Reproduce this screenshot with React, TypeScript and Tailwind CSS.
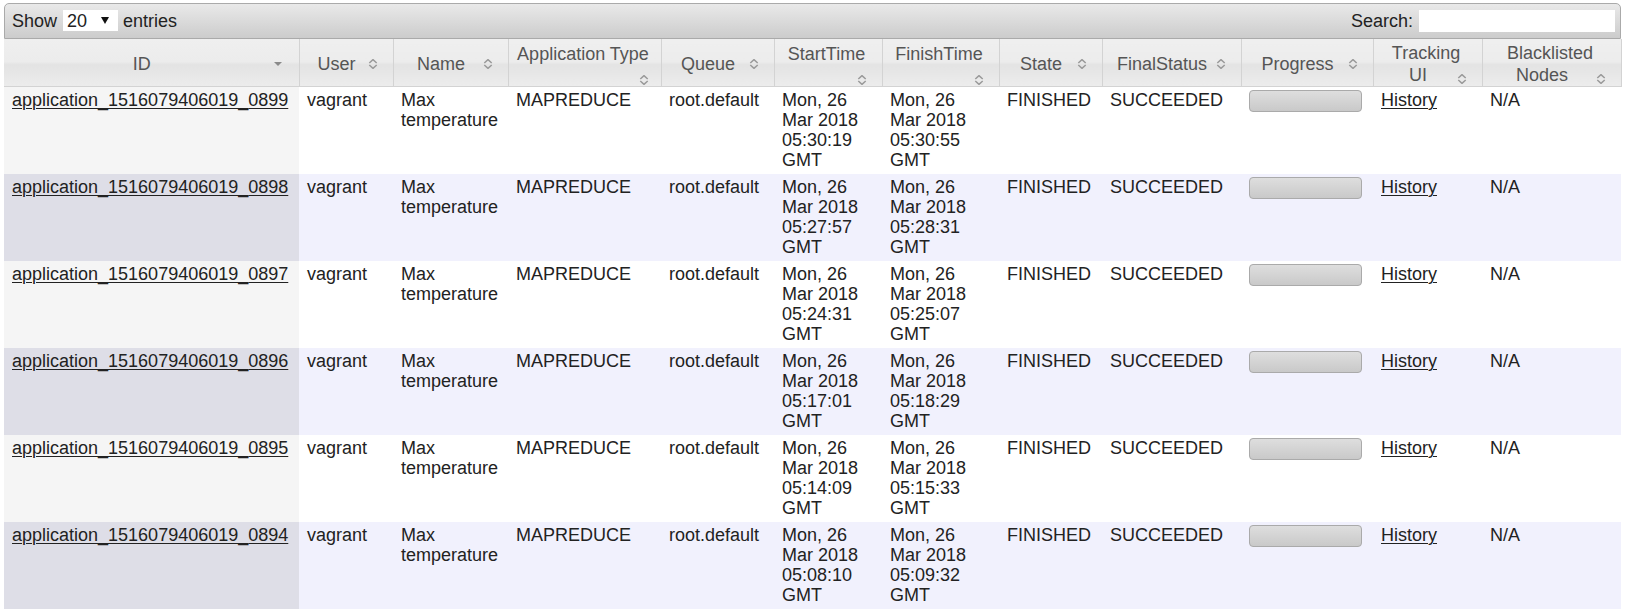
import React from "react";

const rows = [
  { id: "0899", s: "05:30:19", f: "05:30:55" },
  { id: "0898", s: "05:27:57", f: "05:28:31" },
  { id: "0897", s: "05:24:31", f: "05:25:07" },
  { id: "0896", s: "05:17:01", f: "05:18:29" },
  { id: "0895", s: "05:14:09", f: "05:15:33" },
  { id: "0894", s: "05:08:10", f: "05:09:32" },
];

type Col = { label: string; w: number; iconCls: string; pad: string; sorted?: boolean };

const cols: Col[] = [
  { label: "ID", w: 295, iconCls: "mt-[6px]", pad: "pl-[9px] pr-[12px]", sorted: true },
  { label: "User", w: 94, iconCls: "mt-[6px]", pad: "pl-[9px] pr-[12px]" },
  { label: "Name", w: 115, iconCls: "mt-[6px]", pad: "pl-[9px] pr-[12px]" },
  { label: "Application Type", w: 153, iconCls: "mt-[10px]", pad: "pl-[6px] pr-[9px]" },
  { label: "Queue", w: 113, iconCls: "mt-[6px]", pad: "pl-[9px] pr-[12px]" },
  { label: "StartTime", w: 108, iconCls: "mt-[10px]", pad: "pl-[9px] pr-[12px]" },
  { label: "FinishTime", w: 117, iconCls: "mt-[10px]", pad: "pl-[9px] pr-[12px]" },
  { label: "State", w: 103, iconCls: "mt-[6px]", pad: "pl-[9px] pr-[12px]" },
  { label: "FinalStatus", w: 139, iconCls: "mt-[6px]", pad: "pl-[9px] pr-[12px]" },
  { label: "Progress", w: 132, iconCls: "mt-[6px]", pad: "pl-[9px] pr-[12px]" },
  { label: "Tracking UI", w: 109, iconCls: "mt-[10px]", pad: "pl-[9px] pr-[12px]" },
  { label: "Blacklisted Nodes", w: 139, iconCls: "mt-[10px]", pad: "pl-[9px] pr-[12px]" },
];

function SortIcon({ sorted }: { sorted?: boolean }) {
  if (sorted) {
    return (
      <svg width="16" height="10" viewBox="0 0 16 10">
        <polygon points="3,3 11,3 7,7" fill="#8a8a8a" />
      </svg>
    );
  }
  return (
    <svg width="16" height="10" viewBox="0 0 16 10">
      <path d="M4.3 4 L8 0.6 L11.7 4" fill="none" stroke="#9a9a9a" strokeWidth="1.5" />
      <path d="M4.3 6 L8 9.4 L11.7 6" fill="none" stroke="#9a9a9a" strokeWidth="1.5" />
    </svg>
  );
}

export default function App() {
  return (
    <div
      className="h-[610px] overflow-hidden bg-white text-[18px] text-[#222]"
      style={{ fontFamily: '"Liberation Sans", Arial, sans-serif' }}
    >
      <div className="ml-[4px] mt-[3px] w-[1617px]">
        {/* toolbar */}
        <div className="flex h-[36px] items-center justify-between rounded-t-[5px] border border-[#aaaaaa] bg-[linear-gradient(to_bottom,#e9e9e9,#cccccc)] pl-[7px] pr-[5px] pb-[1px] leading-[20px] text-[#222]">
          <div className="flex items-center">
            <span>Show</span>
            <span className="ml-[6px] flex h-[21px] w-[55px] items-center justify-between bg-white pl-[4px] pr-[9px]">
              <span>20</span>
              <svg width="8" height="7" viewBox="0 0 8 7">
                <polygon points="0,0 8,0 4,7" fill="#111" />
              </svg>
            </span>
            <span className="ml-[5px]">entries</span>
          </div>
          <div className="flex items-center">
            <span>Search:</span>
            <span className="ml-[6px] block h-[22px] w-[196px] bg-white" />
          </div>
        </div>

        <table className="w-[1617px] table-fixed border-collapse">
          <colgroup>
            {cols.map((c) => (
              <col key={c.label} style={{ width: c.w }} />
            ))}
          </colgroup>
          <thead>
            <tr>
              {cols.map((c) => (
                <th
                  key={c.label}
                  className={
                    "border-r border-b border-[#d3d3d3] bg-[linear-gradient(to_bottom,#efefef_0%,#ececec_48%,#e3e3e3_55%,#e8e8e8_80%,#ececec_100%)] pt-[3px] pb-0 text-center align-middle font-normal leading-[22px] text-[#555] " +
                    c.pad
                  }
                >
                  <div>
                    {c.label}
                    <span className={"float-right block h-[10px] w-[16px] " + c.iconCls}>
                      <SortIcon sorted={c.sorted} />
                    </span>
                  </div>
                </th>
              ))}
            </tr>
          </thead>
          <tbody>
            {rows.map((r, i) => {
              const even = i % 2 === 1;
              const rowBg = even ? "bg-[#f1f1fd]" : "bg-white";
              const sortBg = even ? "bg-[#dedee7]" : "bg-[#f5f5f5]";
              const td = "align-top pl-[8px] pr-[8px] pt-[3px] pb-[4px] leading-[20px] text-left font-normal";
              return (
                <tr key={r.id} className={rowBg}>
                  <td className={td + " " + sortBg}>
                    <a className="underline decoration-1 underline-offset-2">application_1516079406019_{r.id}</a>
                  </td>
                  <td className={td}>vagrant</td>
                  <td className={td}>Max temperature</td>
                  <td className={td}>MAPREDUCE</td>
                  <td className={td}>root.default</td>
                  <td className={td}>Mon, 26 Mar 2018 {r.s} GMT</td>
                  <td className="align-top pl-[8px] pr-[14px] pt-[3px] pb-[4px] text-left leading-[20px]">
                    Mon, 26 Mar 2018 {r.f} GMT
                  </td>
                  <td className={td}>FINISHED</td>
                  <td className={td}>SUCCEEDED</td>
                  <td className={td}>
                    <div className="h-[22px] w-[113px] rounded-[4px] border border-[#aaaaaa] bg-[linear-gradient(to_bottom,#dedede,#c9c9c9)]" />
                  </td>
                  <td className={td}>
                    <a className="underline decoration-1 underline-offset-2">History</a>
                  </td>
                  <td className={td}>N/A</td>
                </tr>
              );
            })}
          </tbody>
        </table>
      </div>
    </div>
  );
}
